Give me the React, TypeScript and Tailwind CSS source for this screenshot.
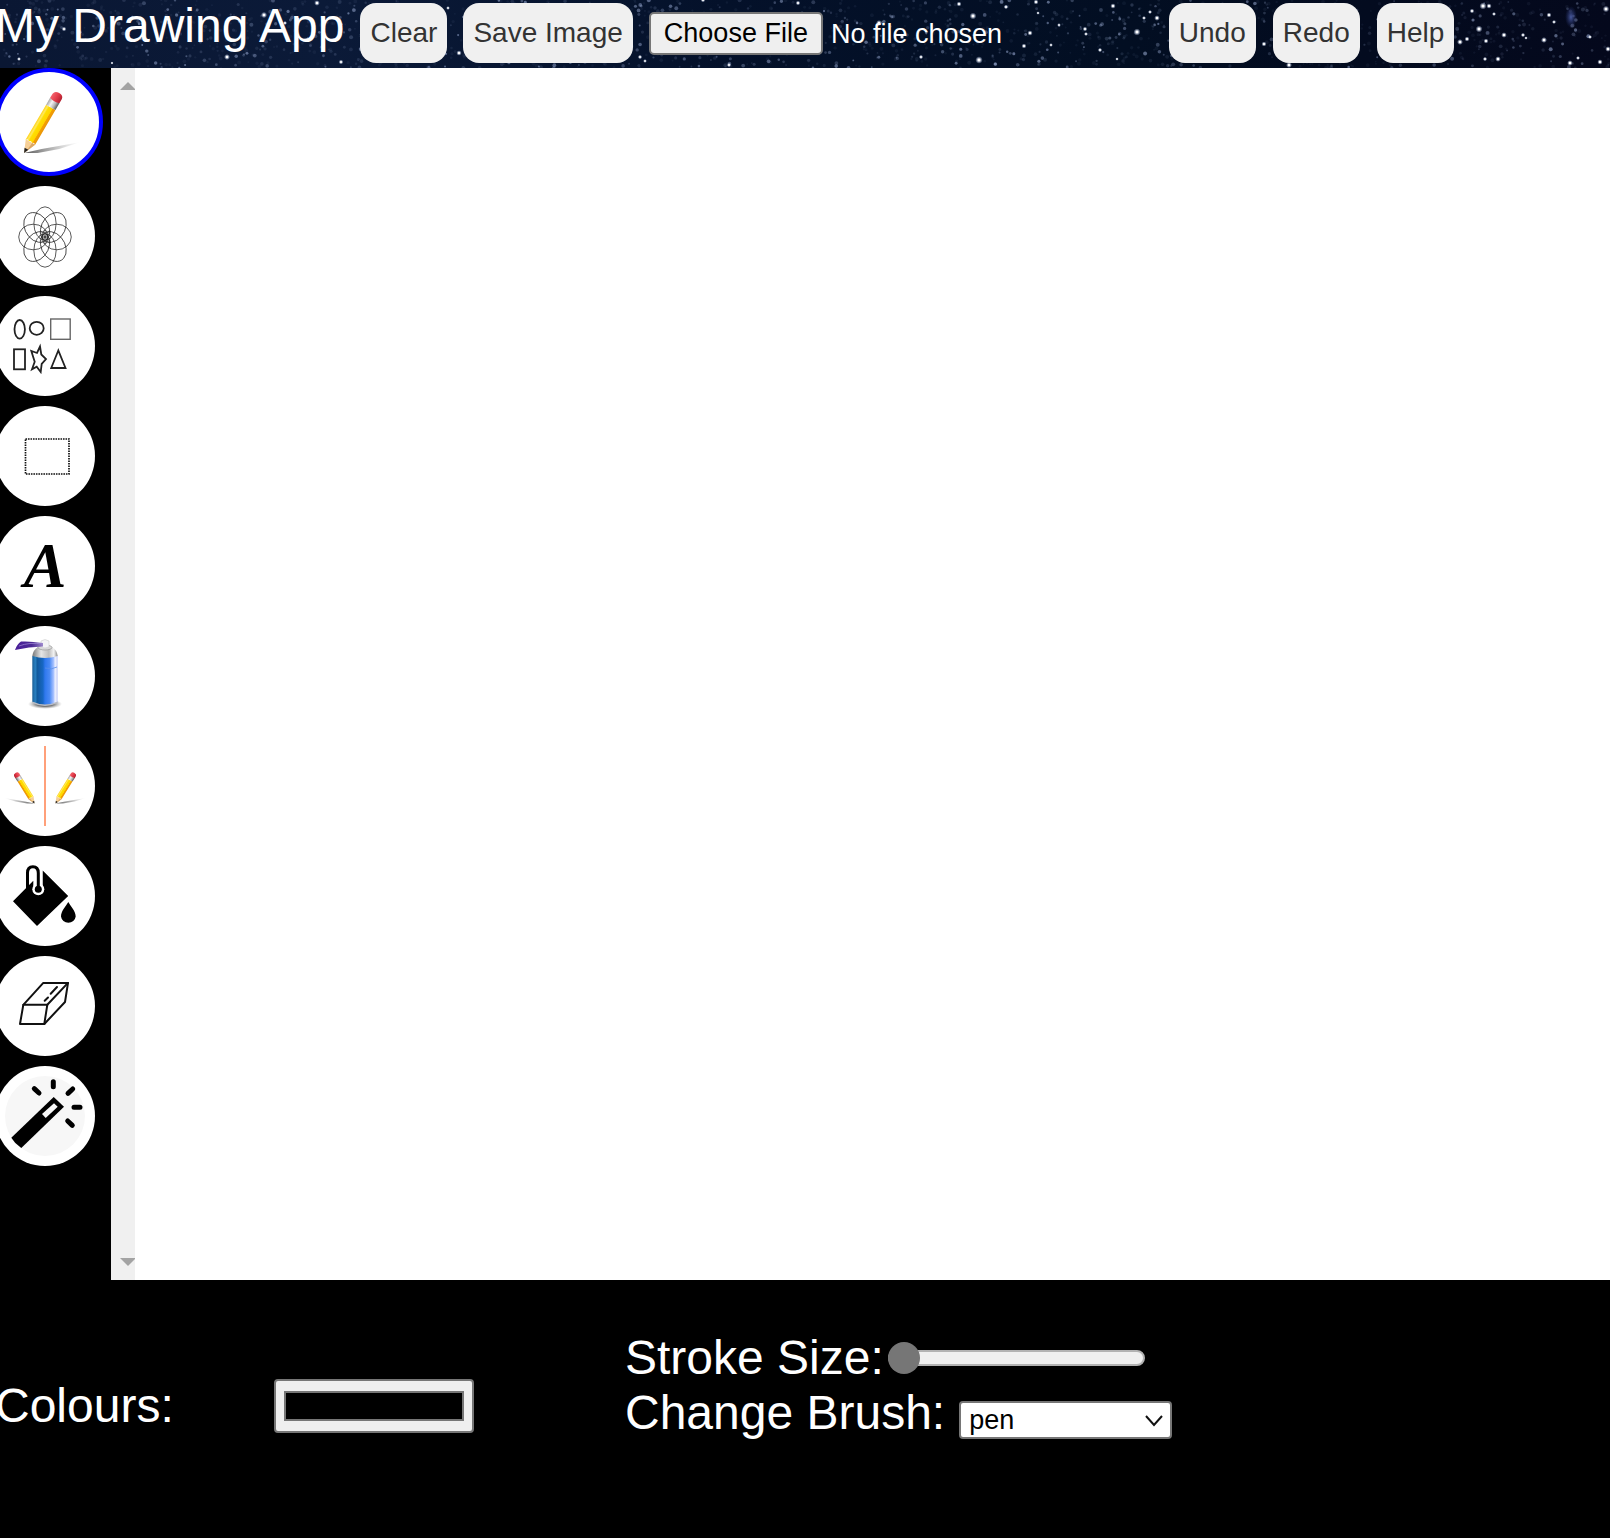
import React from "react";

type Star = { x: number; y: number; r: number; o: number };

/* Brightest stars of the banner sky */
const BRIGHT: [number, number, number][] = [
  [19, 59, 1.4], [64, 29, 1.6], [112, 63, 1.1], [227, 57, 2], [264, 15, 2.1], [285, 23, 1.4],
  [298, 19, 1.4], [317, 3, 1.9], [341, 62, 1.6], [459, 53, 1.8], [448, 8, 1.3], [640, 57, 1.5],
  [645, 61, 1.3], [703, 0, 1.6], [729, 65, 1.5], [798, 3, 1.6], [902, 37, 1.6], [921, 57, 1.5],
  [879, 23, 2], [959, 4, 1.7], [973, 16, 2.3], [979, 60, 2.5], [1006, 7, 1.5],
  [1036, 2, 1.7], [1030, 33, 1.8], [1024, 46, 1.7], [1051, 45, 1.3], [1038, 13, 1.2],
  [1059, 25, 1.3], [1085, 29, 1.6], [1086, 34, 1.4], [1100, 50, 1.5], [1113, 6, 1.8],
  [1137, 32, 2.4], [1144, 18, 1.4], [1150, 12, 1.4], [1157, 18, 1.9], [1117, 59, 1.2],
  [1264, 44, 1.7], [1289, 65, 2], [1460, 42, 2], [1467, 39, 1.7], [1472, 11, 1.6],
  [1483, 6, 2.4], [1489, 6, 1.8], [1479, 29, 2.3], [1486, 41, 1.7], [1485, 59, 1.5],
  [1494, 14, 1.4], [1498, 59, 1.9], [1504, 35, 1.9], [1523, 35, 1.5], [1526, 38, 1.2],
  [1544, 40, 2], [1549, 15, 1.7], [1554, 22, 1.4], [1570, 63, 1.9], [1578, 58, 1.4],
  [1590, 37, 1.4], [1600, 62, 1.8], [1606, 9, 2.2], [1608, 49, 1.9],
];

function makeStars(count: number): Star[] {
  let seed = 4711;
  const next = () => {
    seed = (seed * 1103515245 + 12345) % 2147483648;
    return seed / 2147483648;
  };
  return Array.from({ length: count }, () => ({
    x: next() * 1610,
    y: next() * 68,
    r: 0.9 + next() * 1.1,
    o: 0.06 + Math.pow(next(), 4) * 0.5,
  }));
}

const STARS = makeStars(1700);

function Sky() {
  return (
    <svg
      className="absolute inset-0 h-full w-full"
      viewBox="0 0 1610 68"
      preserveAspectRatio="xMinYMin slice"
      aria-hidden="true"
    >
      <defs>
        <linearGradient id="sky" x1="0" x2="1" y1="0" y2="0">
          <stop offset="0" stopColor="#0a1733" />
          <stop offset="0.2" stopColor="#0b1a38" />
          <stop offset="0.45" stopColor="#04112a" />
          <stop offset="0.7" stopColor="#020e22" />
          <stop offset="1" stopColor="#04081c" />
        </linearGradient>
        <radialGradient id="nebula">
          <stop offset="0" stopColor="#5a6fc0" stopOpacity="0.8" />
          <stop offset="1" stopColor="#2c3a80" stopOpacity="0" />
        </radialGradient>
        <radialGradient id="star">
          <stop offset="0.25" stopColor="#ffffff" />
          <stop offset="1" stopColor="#a9bce4" stopOpacity="0" />
        </radialGradient>
      </defs>
      <rect width="1610" height="68" fill="url(#sky)" />
      {STARS.map((s, i) => (
        <circle key={i} cx={s.x} cy={s.y} r={s.r} fill="#a3b4dc" opacity={s.o} />
      ))}
      <ellipse cx="1571" cy="17" rx="6" ry="11" fill="url(#nebula)" />
      {BRIGHT.map(([x, y, r], i) => (
        <circle key={i} cx={x} cy={y} r={r * 1.5} fill="url(#star)" />
      ))}
    </svg>
  );
}

/* Pencil with its tip at the origin, pointing down, 70 units long */
function Pencil({ id }: { id: string }) {
  return (
    <g>
      <defs>
        <linearGradient id={id + "-body"} x1="0" x2="1" y1="0" y2="0">
          <stop offset="0" stopColor="#ffd21a" />
          <stop offset="0.2" stopColor="#ffe95c" />
          <stop offset="0.35" stopColor="#ffde00" />
          <stop offset="0.68" stopColor="#ffd400" />
          <stop offset="0.74" stopColor="#f5a000" />
          <stop offset="1" stopColor="#e8950a" />
        </linearGradient>
        <linearGradient id={id + "-metal"} x1="0" x2="1" y1="0" y2="0">
          <stop offset="0" stopColor="#a8a8a8" />
          <stop offset="0.35" stopColor="#f4f4f4" />
          <stop offset="0.7" stopColor="#b4b4b4" />
          <stop offset="1" stopColor="#555555" />
        </linearGradient>
        <linearGradient id={id + "-rubber"} x1="0" x2="1" y1="0" y2="0">
          <stop offset="0" stopColor="#f2626c" />
          <stop offset="0.5" stopColor="#e33c4a" />
          <stop offset="1" stopColor="#b3202f" />
        </linearGradient>
        <linearGradient id={id + "-shade"} x1="0" x2="1" y1="0" y2="0">
          <stop offset="0" stopColor="#444444" stopOpacity="0.9" />
          <stop offset="0.5" stopColor="#777777" stopOpacity="0.55" />
          <stop offset="1" stopColor="#aaaaaa" stopOpacity="0" />
        </linearGradient>
      </defs>
      <path d="M0 0 L18 -4 L57 -11 L36 -4 L14 0 Z" fill={"url(#" + id + "-shade)"} />
      <g transform="rotate(30.4)">
        <path d="M0 0 L-5.500 -13 L5.500 -13 Z" fill="#f6cf96" />
        <path d="M1 -2 L5.500 -13 L2 -13 Z" fill="#dba765" />
        <path d="M0 0 L-2.200 -5 L2.200 -5 Z" fill="#222222" />
        <path d="M-5.500 -12.500 Q-4 -15 -2 -13 Q0 -15 2 -13 Q4 -15 5.500 -12.500 V-54 H-5.500 Z" fill={"url(#" + id + "-body)"} />
        <rect x="-5.500" y="-62" width="11" height="8" fill={"url(#" + id + "-metal)"} />
        <path d="M-5.500 -62 V-67 Q-5 -71 0 -71 Q5 -71 5.500 -67 V-62 Q0 -60 -5.500 -62 Z" fill={"url(#" + id + "-rubber)"} />
      </g>
    </g>
  );
}

function PencilIcon() {
  return (
    <svg viewBox="4 4 100 100" className="h-full w-full" aria-hidden="true">
      <g transform="translate(29 85) scale(0.98)">
        <Pencil id="pen" />
      </g>
    </svg>
  );
}

function SpiroIcon() {
  return (
    <svg viewBox="0 0 100 100" className="h-full w-full" aria-hidden="true">
      <g transform="translate(50 51) scale(0.87 1)" fill="none" stroke="#222222" strokeWidth="0.8">
        {[0, 45, 90, 135, 180, 225, 270, 315].map((a) => (
          <ellipse key={a} cx="0" cy="-13.500" rx="12.800" ry="16.700" transform={"rotate(" + a + ")"} />
        ))}
        {[0, 45, 90, 135].map((a) => (
          <path key={a} d="M-1.500 -7 L1.500 7 M1.500 -7 L-1.500 7" strokeWidth="0.4" transform={"rotate(" + a + ")"} />
        ))}
      </g>
    </svg>
  );
}

function ShapesIcon() {
  return (
    <svg viewBox="0 0 100 100" className="h-full w-full" fill="none" stroke="#222222" strokeWidth="1.800" aria-hidden="true">
      <ellipse cx="24.700" cy="33.300" rx="5.200" ry="9.300" />
      <ellipse cx="41.700" cy="32.300" rx="7" ry="6.500" />
      <rect x="55.700" y="23" width="19.500" height="20.300" stroke="#666666" strokeWidth="1.400" />
      <rect x="19" y="53.300" width="11" height="20" />
      <path d="M45 50.500 L46.300 58.500 L51 63 L46.700 68 L45.700 76 L41.700 70.700 L37 73.300 L39.700 65.700 L36.300 55 L42 57 Z" />
      <path d="M63.300 54.500 L56.200 72 H70.500 Z" />
    </svg>
  );
}

function SelectIcon() {
  return (
    <svg viewBox="0 0 100 100" className="h-full w-full" aria-hidden="true">
      <rect x="30.500" y="33" width="43.500" height="35" fill="none" stroke="#111111" strokeWidth="1.700" strokeDasharray="1.600 0.900" />
    </svg>
  );
}

function SprayIcon() {
  return (
    <svg viewBox="0 4 100 100" className="h-full w-full" aria-hidden="true">
      <defs>
        <linearGradient id="can" x1="0" x2="1" y1="0" y2="0">
          <stop offset="0" stopColor="#1b5f96" />
          <stop offset="0.12" stopColor="#2a80c0" />
          <stop offset="0.2" stopColor="#125a9c" />
          <stop offset="0.42" stopColor="#1767c4" />
          <stop offset="0.5" stopColor="#2f78ee" />
          <stop offset="0.68" stopColor="#4a8af4" />
          <stop offset="0.84" stopColor="#a9c2ff" />
          <stop offset="0.9" stopColor="#eef1ff" />
          <stop offset="1" stopColor="#c5cdf5" />
        </linearGradient>
        <linearGradient id="dome" x1="0" x2="1" y1="0" y2="0">
          <stop offset="0" stopColor="#777777" />
          <stop offset="0.35" stopColor="#e6e6e6" />
          <stop offset="0.65" stopColor="#bdbdbd" />
          <stop offset="0.85" stopColor="#f4f4f4" />
          <stop offset="1" stopColor="#888888" />
        </linearGradient>
        <linearGradient id="mist" x1="0" x2="1" y1="0" y2="0">
          <stop offset="0" stopColor="#4a1e9a" />
          <stop offset="0.6" stopColor="#4b2a94" />
          <stop offset="1" stopColor="#9a86c8" />
        </linearGradient>
        <radialGradient id="floor">
          <stop offset="0.5" stopColor="#555555" stopOpacity="0.8" />
          <stop offset="1" stopColor="#999999" stopOpacity="0" />
        </radialGradient>
      </defs>
      <ellipse cx="50" cy="82" rx="17" ry="5" fill="url(#floor)" />
      <path d="M37.300 34 V80 Q50 86 62.700 80 V34 Z" fill="url(#can)" />
      <path d="M37.300 79.500 Q50 85.500 62.700 79.500 V81 Q50 87 37.300 81 Z" fill="#b8bcc6" />
      <path d="M50 46 Q57 48 62 45" stroke="#5a8fe8" strokeWidth="0.800" fill="none" />
      <path d="M37.300 34 Q38 28 43 25 H57 Q62 28 62.700 34 Q50 38 37.300 34 Z" fill="url(#dome)" />
      <ellipse cx="50" cy="25.500" rx="7" ry="2.500" fill="#d9d9d9" stroke="#999999" strokeWidth="0.700" />
      <path d="M46 25 V19 Q50 16 54 19 V25 Q50 27 46 25 Z" fill="#f3f3f5" stroke="#cccccc" strokeWidth="0.600" />
      <path d="M20 28 Q22 22 26 19.500 Q36 19 48 21 V24.500 Q34 24.500 20 28 Z" fill="url(#mist)" />
      <path d="M24 24 Q34 20 48 22" stroke="#a58ed8" strokeWidth="0.700" fill="none" />
    </svg>
  );
}

function MirrorIcon() {
  return (
    <svg viewBox="0 0 100 100" className="h-full w-full" aria-hidden="true">
      <rect x="49" y="10" width="2" height="80" fill="#ffa07a" />
      <g transform="translate(60.500 67.500) scale(0.530 0.500)">
        <Pencil id="right" />
      </g>
      <g transform="translate(39.500 67.500) scale(-0.530 0.500)">
        <Pencil id="left" />
      </g>
    </svg>
  );
}

function FillIcon() {
  return (
    <svg viewBox="0 4 100 100" className="h-full w-full" aria-hidden="true">
      <path d="M47.700 28.500 L73.200 54 L42 84 L18 59.300 L38.300 38.700 L47.700 44 Z" />
      <path d="M38.300 44 V36 L47.200 28 V46 Z" fill="#ffffff" />
      <circle cx="43.300" cy="47.300" r="6" fill="#ffffff" />
      <path d="M32.500 46 V31 Q32.500 24.800 37.900 24.800 Q43.300 24.800 43.300 31 V47" fill="none" stroke="#000000" strokeWidth="3" />
      <circle cx="43.300" cy="47.300" r="3.500" />
      <path d="M73.300 60 C75.500 64 80.700 69 80.700 74.500 A7.400 7 0 0 1 66 74.500 C66 69 71 64 73.300 60 Z" />
    </svg>
  );
}

function EraserIcon() {
  return (
    <svg viewBox="0 0 100 100" className="h-full w-full" fill="none" stroke="#111111" strokeWidth="2" strokeLinejoin="round" strokeLinecap="round" aria-hidden="true">
      <path d="M25 68 L28.300 48.800 H52.300 L49.300 68 Z" />
      <path d="M28.300 48.800 L48.300 26.900 H73 L52.300 48.800" />
      <path d="M73 26.900 L70 46 L49.300 68" />
      <path d="M49.700 44.700 L53 41.500 M55.700 37.700 L62 31" />
    </svg>
  );
}

function WandIcon() {
  return (
    <svg viewBox="0 0 100 100" className="h-full w-full" aria-hidden="true">
      <circle cx="50" cy="50" r="40" fill="#f7f7f7" />
      <path d="M16.300 71.700 L58.700 31 L69 40.700 L26.300 82 Q20 78 16.300 71.700 Z" />
      <path d="M47 48 L59 37.300 L62.700 40.700 L50.700 52 Z" fill="#f7f7f7" />
      <path
        d="M58.300 15.700 V20.700 M39.300 22.700 L44 27 M77.700 23 L73 27.300 M79 41.300 H85 M72.700 55 L77.300 59.300"
        stroke="#000000"
        strokeWidth="5"
        strokeLinecap="round"
      />
    </svg>
  );
}

const TOOLS: { name: string; icon: React.ReactNode }[] = [
  { name: "Spirograph", icon: <SpiroIcon /> },
  { name: "Shapes", icon: <ShapesIcon /> },
  { name: "Select", icon: <SelectIcon /> },
  {
    name: "Text",
    icon: (
      <span className="font-['Liberation_Serif',serif] text-[64px] leading-[100px] font-bold italic">A</span>
    ),
  },
  { name: "Spray can", icon: <SprayIcon /> },
  { name: "Mirror draw", icon: <MirrorIcon /> },
  { name: "Fill", icon: <FillIcon /> },
  { name: "Eraser", icon: <EraserIcon /> },
  { name: "Magic wand", icon: <WandIcon /> },
];

function BarButton({ children }: { children: React.ReactNode }) {
  return (
    <button
      type="button"
      className="h-[60px] shrink-0 rounded-2xl bg-[#f0f0f0] px-[10px] text-[28px] leading-8 text-[#333333]"
    >
      {children}
    </button>
  );
}

export default function App() {
  return (
    <div className="flex min-h-screen flex-col overflow-hidden bg-black font-['Liberation_Sans',Arial,sans-serif] text-white">
      <header className="relative flex items-center pt-[3px] pb-[5px]">
        <Sky />
        <div className="relative flex items-center gap-4">
          <h1 className="-mt-[5px] -ml-[5px] shrink-0 self-start text-5xl leading-[55px] whitespace-nowrap">My Drawing App</h1>
          <BarButton>Clear</BarButton>
          <BarButton>Save Image</BarButton>
          <input
            type="file"
            aria-label="Open an image"
            className="w-[504px] text-[27px] leading-8 file:mr-2 file:h-[43px] file:rounded-[5px] file:border-2 file:border-solid file:border-[#767676] file:bg-[#efefef] file:px-[13px] file:text-black"
          />
          <div className="flex gap-[17px]">
            <BarButton>Undo</BarButton>
            <BarButton>Redo</BarButton>
            <BarButton>Help</BarButton>
          </div>
        </div>
      </header>

      <main className="flex flex-1">
        <nav aria-label="Tools" className="-ml-[5px] flex w-[116px] shrink-0 flex-col gap-[10px]">
          <button
            type="button"
            aria-label="Pencil"
            aria-pressed="true"
            className="size-[108px] rounded-full border-4 border-[#0000ff] bg-white"
          >
            <PencilIcon />
          </button>
          {TOOLS.map((t) => (
            <button
              key={t.name}
              type="button"
              aria-label={t.name}
              className="size-[100px] overflow-hidden rounded-full bg-white text-black"
            >
              {t.icon}
            </button>
          ))}
        </nav>
        <div className="flex w-6 shrink-0 flex-col justify-between overflow-hidden bg-[#f0f0f0] py-[14px] pl-[9px]" aria-hidden="true">
          <svg className="h-2 w-4 shrink-0" viewBox="0 0 16 8" fill="#a3a3a3">
            <path d="M0 8 L8 0 L16 8 Z" />
          </svg>
          <svg className="h-2 w-4 shrink-0" viewBox="0 0 16 8" fill="#a3a3a3">
            <path d="M0 0 L8 8 L16 0 Z" />
          </svg>
        </div>
        <div className="relative flex-1 bg-white">
          <canvas aria-label="Drawing area" className="absolute inset-0 h-full w-full" />
        </div>
      </main>

      <footer className="-ml-[5px] flex pt-[50px] pb-[98px] text-5xl leading-[55px]">
        <div className="flex w-[630px] shrink-0 items-center self-start pt-12">
          <label htmlFor="colour" className="w-[279px] shrink-0">Colours:</label>
          <input
            id="colour"
            type="color"
            defaultValue="#000000"
            className="h-[54px] w-[200px] appearance-none rounded border-2 border-[#767676] bg-[#efefef] p-0 [&::-webkit-color-swatch]:border-2 [&::-webkit-color-swatch]:border-[#767676] [&::-webkit-color-swatch-wrapper]:px-2 [&::-webkit-color-swatch-wrapper]:py-[10px]"
          />
        </div>
        <div>
          <div className="flex items-center gap-1">
            <label htmlFor="size">Stroke Size:</label>
            <input
              id="size"
              type="range"
              min={1}
              max={100}
              defaultValue={1}
              className="h-8 w-[257px] appearance-none bg-transparent [&::-webkit-slider-runnable-track]:h-4 [&::-webkit-slider-runnable-track]:rounded-full [&::-webkit-slider-runnable-track]:border-2 [&::-webkit-slider-runnable-track]:border-[#b2b2b2] [&::-webkit-slider-runnable-track]:bg-[#efefef] [&::-webkit-slider-thumb]:-mt-[10px] [&::-webkit-slider-thumb]:-ml-[2px] [&::-webkit-slider-thumb]:size-8 [&::-webkit-slider-thumb]:appearance-none [&::-webkit-slider-thumb]:rounded-full [&::-webkit-slider-thumb]:bg-[#767676]"
            />
          </div>
          <div className="flex gap-[14px]">
            <label htmlFor="brush">Change Brush:</label>
            <div className="relative mt-4 h-[38px] w-[213px]">
              <select
                id="brush"
                defaultValue="pen"
                className="block h-full w-full appearance-none rounded border-2 border-[#767676] bg-white pl-2 text-[27px] leading-8 text-black"
              >
                <option>pen</option>
                <option>brush</option>
                <option>marker</option>
              </select>
              <svg className="pointer-events-none absolute top-[14px] right-[9px] h-3 w-[18px]" viewBox="0 0 18 12" fill="none" stroke="#111111" strokeWidth="2" aria-hidden="true">
                <path d="M1 1 L9 10 L17 1" />
              </svg>
            </div>
          </div>
        </div>
      </footer>
    </div>
  );
}
